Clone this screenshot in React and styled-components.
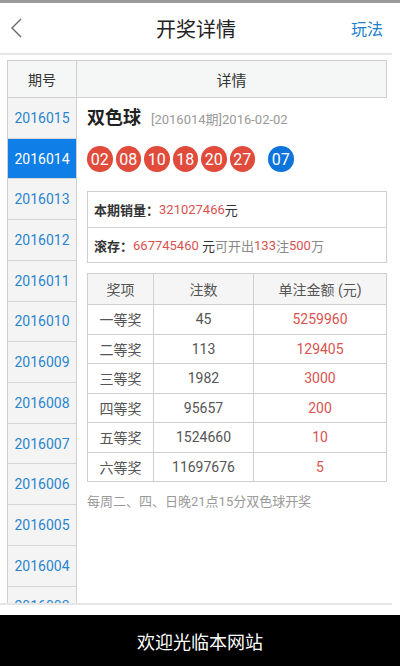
import React from "react";
import styled, { createGlobalStyle } from "styled-components";

const GlobalStyle = createGlobalStyle`
  html, body { margin: 0; padding: 0; background: #fff; }
  body { font-family: Roboto, "Noto Sans CJK SC", sans-serif; }
  * { box-sizing: border-box; }
`;

const Page = styled.div`
  width: 400px;
  height: 666px;
  display: flex;
  flex-direction: column;
  overflow: hidden;
  background: #fff;
`;

const TopStrip = styled.div`
  height: 3px;
  background: #9a9a9a;
  flex: none;
`;

const Header = styled.div`
  height: 52px;
  flex: none;
  display: grid;
  grid-template-columns: 60px 1fr 60px;
  align-items: center;
  border-bottom: 2px solid #e6e6e6;
  margin-right: 8px;
`;

const Back = styled.div`
  padding-left: 9px;
  display: flex;
  align-items: center;
`;

const Title = styled.div`
  text-align: center;
  font-size: 20px;
  color: #222;
`;

const Rule = styled.div`
  text-align: right;
  padding-right: 9px;
  font-size: 16px;
  color: #1f7fcf;
`;

const Main = styled.div`
  flex: 1;
  overflow: hidden;
  padding: 5px 13px 0 7px;
  display: grid;
  grid-template-columns: 70px 1fr;
  grid-template-rows: 38px 1fr;
  align-content: start;
`;

const HeadCell = styled.div`
  background: #f5f7f7;
  border: 1px solid #cfcfcf;
  border-left: ${(p) => (p.$first ? "1px solid #cfcfcf" : "none")};
  display: flex;
  align-items: center;
  justify-content: center;
  font-size: ${(p) => (p.$first ? "14px" : "15px")};
  color: #333;
`;

const IssueList = styled.div`
  border-left: 1px solid #cfcfcf;
  border-right: 1px solid #cfcfcf;
  background: #f4f4f4;
`;

const Issue = styled.div`
  height: 40.73px;
  border-bottom: 1px solid #d6d6d6;
  display: flex;
  align-items: center;
  justify-content: center;
  font-size: 14px;
  color: ${(p) => (p.$active ? "#fff" : "#2a85d0")};
  background: ${(p) => (p.$active ? "#0f7ee6" : "transparent")};
`;

const Detail = styled.div`
  padding: 5px 0 0 10px;
`;

const NameRow = styled.div`
  display: flex;
  align-items: baseline;
  gap: 10px;
  height: 26px;
`;

const Name = styled.span`
  font-size: 18px;
  font-weight: bold;
  color: #222;
`;

const IssueDate = styled.span`
  font-size: 13px;
  color: #999;
`;

const Balls = styled.div`
  display: flex;
  align-items: center;
  gap: 3px;
  margin-top: 17px;
  height: 26px;
`;

const Ball = styled.div`
  width: 25.5px;
  height: 25.5px;
  border-radius: 50%;
  background: ${(p) => (p.$blue ? "#0d74dc" : "#e14b3b")};
  color: #fff;
  font-size: 16px;
  display: flex;
  align-items: center;
  justify-content: center;
  margin-left: ${(p) => (p.$blue ? "10px" : "0")};
`;

const InfoBox = styled.div`
  margin-top: 19px;
  border: 1px solid #cfcfcf;
`;

const InfoRow = styled.div`
  height: 35px;
  display: flex;
  align-items: center;
  padding-left: 6px;
  font-size: 13px;
  color: #333;
  & + & {
    border-top: 1px solid #d6d6d6;
  }
`;

const Label = styled.span`
  font-weight: bold;
  color: #333;
`;

const Red = styled.span`
  color: #d9534f;
`;

const Gray = styled.span`
  color: #888;
`;

const PrizeTable = styled.table`
  margin-top: 10px;
  width: 100%;
  border-collapse: collapse;
  font-size: 14px;
  color: #555;
  th, td {
    border: 1px solid #cfcfcf;
    text-align: center;
    height: 29.5px;
    padding: 0;
    font-weight: normal;
  }
  th {
    background: #f5f5f5;
    height: 31px;
  }
`;

const Amount = styled.td`
  color: #d9534f;
`;

const Note = styled.div`
  margin-top: 9px;
  font-size: 13px;
  color: #999;
`;

const BottomLine = styled.div`
  height: 2px;
  background: #e6e6e6;
  margin-right: 8px;
  flex: none;
`;

const Spacer = styled.div`
  height: 10px;
  flex: none;
`;

const Footer = styled.div`
  height: 51px;
  flex: none;
  background: #000;
  color: #fff;
  font-size: 18px;
  display: flex;
  align-items: center;
  justify-content: center;
`;

const issues = [
  "2016015", "2016014", "2016013", "2016012", "2016011", "2016010",
  "2016009", "2016008", "2016007", "2016006", "2016005", "2016004", "2016003",
];

const reds = ["02", "08", "10", "18", "20", "27"];

const prizes = [
  ["一等奖", "45", "5259960"],
  ["二等奖", "113", "129405"],
  ["三等奖", "1982", "3000"],
  ["四等奖", "95657", "200"],
  ["五等奖", "1524660", "10"],
  ["六等奖", "11697676", "5"],
];

export default function App() {
  return (
    <Page>
      <GlobalStyle />
      <TopStrip />
      <Header>
        <Back>
          <svg width="16" height="22" viewBox="0 0 16 22">
            <path d="M12 2 L3 11 L12 20" fill="none" stroke="#666" strokeWidth="1.4" />
          </svg>
        </Back>
        <Title>开奖详情</Title>
        <Rule>玩法</Rule>
      </Header>
      <Main>
        <HeadCell $first>期号</HeadCell>
        <HeadCell>详情</HeadCell>
        <IssueList>
          {issues.map((n) => (
            <Issue key={n} $active={n === "2016014"}>{n}</Issue>
          ))}
        </IssueList>
        <Detail>
          <NameRow>
            <Name>双色球</Name>
            <IssueDate>[2016014期]2016-02-02</IssueDate>
          </NameRow>
          <Balls>
            {reds.map((b) => (
              <Ball key={b}>{b}</Ball>
            ))}
            <Ball $blue>07</Ball>
          </Balls>
          <InfoBox>
            <InfoRow>
              <Label>本期销量：</Label>
              <Red>321027466</Red>元
            </InfoRow>
            <InfoRow>
              <Label>滚存：</Label>
              <Red>667745460&nbsp;</Red>元<Gray>可开出</Gray>
              <Red>133</Red><Gray>注</Gray><Red>500</Red><Gray>万</Gray>
            </InfoRow>
          </InfoBox>
          <PrizeTable>
            <thead>
              <tr>
                <th style={{ width: "66px" }}>奖项</th>
                <th style={{ width: "100px" }}>注数</th>
                <th>单注金额 (元)</th>
              </tr>
            </thead>
            <tbody>
              {prizes.map(([lv, cnt, amt]) => (
                <tr key={lv}>
                  <td>{lv}</td>
                  <td>{cnt}</td>
                  <Amount>{amt}</Amount>
                </tr>
              ))}
            </tbody>
          </PrizeTable>
          <Note>每周二、四、日晚21点15分双色球开奖</Note>
        </Detail>
      </Main>
      <BottomLine />
      <Spacer />
      <Footer>欢迎光临本网站</Footer>
    </Page>
  );
}
